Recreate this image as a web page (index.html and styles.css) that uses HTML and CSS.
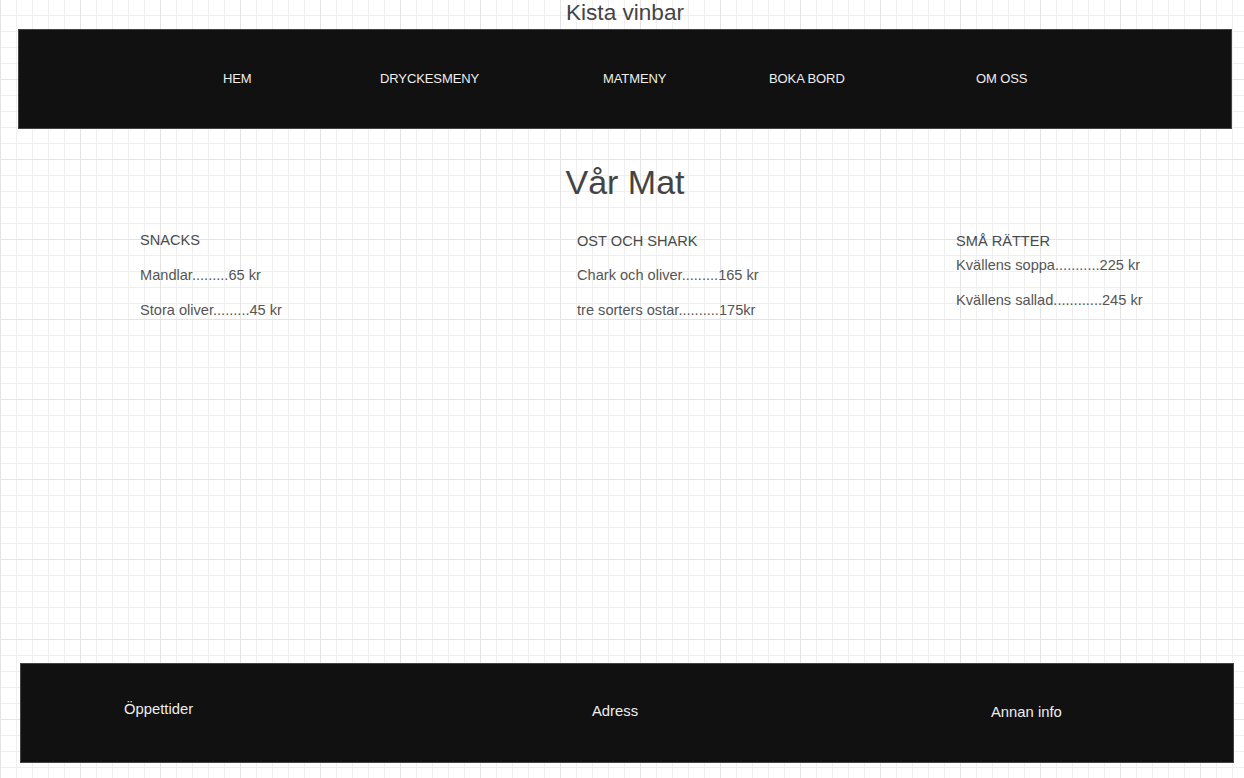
FILE: index.html
```html
<!DOCTYPE html>
<html lang="sv">
<head>
<meta charset="utf-8">
<title>Kista vinbar - Vår Mat</title>
<link rel="stylesheet" href="styles.css">
</head>
<body>
<header class="site-header">
  <h1 class="site-title">Kista vinbar</h1>
  <nav class="main-nav">
    <a class="nav-link" href="#">HEM</a>
    <a class="nav-link" href="#">DRYCKESMENY</a>
    <a class="nav-link" href="#">MATMENY</a>
    <a class="nav-link" href="#">BOKA BORD</a>
    <a class="nav-link" href="#">OM OSS</a>
  </nav>
</header>
<main class="content">
  <h2 class="page-title">Vår Mat</h2>
  <div class="menu">
    <section class="menu-col col-snacks">
      <h3 class="menu-heading">SNACKS</h3>
      <p class="menu-item">Mandlar.........65 kr</p>
      <p class="menu-item">Stora oliver.........45 kr</p>
    </section>
    <section class="menu-col col-ost">
      <h3 class="menu-heading">OST OCH SHARK</h3>
      <p class="menu-item">Chark och oliver.........165 kr</p>
      <p class="menu-item">tre sorters ostar..........175kr</p>
    </section>
    <section class="menu-col col-smaratter">
      <h3 class="menu-heading">SMÅ RÄTTER</h3>
      <p class="menu-item">Kvällens soppa...........225 kr</p>
      <p class="menu-item">Kvällens sallad............245 kr</p>
    </section>
  </div>
</main>
<footer class="site-footer">
  <div class="footer-item f-open">Öppettider</div>
  <div class="footer-item f-address">Adress</div>
  <div class="footer-item f-info">Annan info</div>
</footer>
</body>
</html>
```
FILE: styles.css
```css
html, body {
  margin: 0;
  padding: 0;
}

body {
  min-height: 100vh;
  display: flex;
  flex-direction: column;
  font-family: "Liberation Sans", Arial, sans-serif;
  color: #444;
  background-color: #fff;
  background-image:
    linear-gradient(#e4e4e4 1px, transparent 1px),
    linear-gradient(90deg, #e4e4e4 1px, transparent 1px),
    linear-gradient(#efefef 1px, transparent 1px),
    linear-gradient(90deg, #efefef 1px, transparent 1px);
  background-size: 80px 80px, 80px 80px, 16px 16px, 16px 16px;
  background-position: 0 -1px, 0 0, 0 -1px, 0 0;
}

.site-header {
  margin: 0 12px 0 18px;
}

.site-title {
  margin: 0;
  font-size: 22.6px;
  line-height: 25px;
  font-weight: normal;
  text-align: center;
  color: #444;
}

.main-nav {
  margin-top: 4px;
  height: 100px;
  box-sizing: border-box;
  background: #111;
  border: 1px solid #444;
  display: grid;
  grid-template-columns: 157px 223px 166px 207px auto;
  align-items: center;
  padding-left: 204px;
}

.nav-link {
  color: #eee;
  text-decoration: none;
  font-size: 13px;
  line-height: 16px;
  letter-spacing: -0.1px;
}

.content {
  flex: 1;
  margin: 0 12px 0 18px;
}

.page-title {
  margin: 33px 0 0;
  font-size: 34px;
  line-height: 40px;
  font-weight: normal;
  text-align: center;
  color: #444;
}

.menu {
  margin-top: 31px;
  padding-left: 122px;
  display: grid;
  grid-template-columns: 437px 379px auto;
}

.menu-col {
  display: flex;
  flex-direction: column;
}

.menu-heading {
  margin: 0 0 18px;
  font-size: 14.6px;
  line-height: 16px;
  font-weight: normal;
  color: #4a4a4a;
}

.col-snacks .menu-heading {
  margin-top: -1px;
  margin-bottom: 19px;
}

.menu-item {
  margin: 0 0 19px;
  font-size: 14.6px;
  line-height: 16px;
  color: #555;
}

.col-smaratter .menu-heading {
  margin-bottom: 8px;
}

.site-footer {
  margin: 0 10px 15px 20px;
  height: 100px;
  box-sizing: border-box;
  background: #111;
  border: 1px solid #444;
  display: grid;
  grid-template-columns: 468px 399px auto;
  align-items: start;
  padding: 37px 0 0 103px;
}

.footer-item {
  color: #eee;
  font-size: 14.8px;
  line-height: 17px;
}

.f-address {
  margin-top: 2px;
}

.f-info {
  margin-top: 3px;
}
```
